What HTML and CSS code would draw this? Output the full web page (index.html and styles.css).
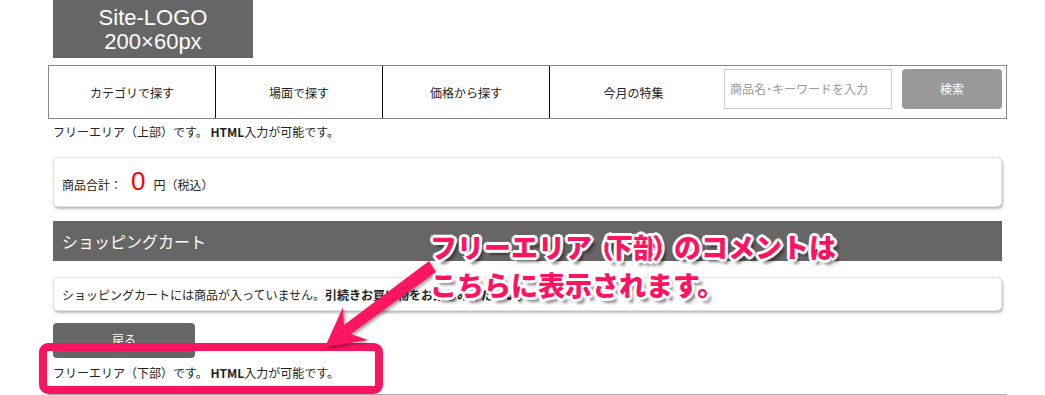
FILE: index.html
```html
<!DOCTYPE html>
<html lang="ja">
<head>
<meta charset="utf-8">
<title>Cart</title>
<link rel="stylesheet" href="styles.css">
</head>
<body>
<div class="page">
  <div class="inner">
    <div class="logo"><span>Site-LOGO</span><span>200×60px</span></div>
  </div>
  <nav class="gnav">
    <a class="gnav-item">カテゴリで探す</a>
    <a class="gnav-item">場面で探す</a>
    <a class="gnav-item">価格から探す</a>
    <a class="gnav-item last">今月の特集</a>
    <div class="search">
      <div class="search-input">商品名･キーワードを入力</div>
      <div class="search-btn">検索</div>
    </div>
  </nav>
  <div class="inner">
    <p class="free top">フリーエリア（上部）です。 <b>HTML</b>入力が可能です。</p>
    <div class="card total">商品合計： <span class="price">0</span> 円（税込）</div>
    <h2 class="cart-head">ショッピングカート</h2>
    <div class="card empty">ショッピングカートには商品が入っていません。<b>引続きお買い物をお楽しみください。</b></div>
    <div class="back">戻る</div>
    <p class="free bottom">フリーエリア（下部）です。 <b>HTML</b>入力が可能です。</p>
  </div>
</div>

<svg class="annot-svg" width="1045" height="395" viewBox="0 0 1045 395">
  <defs>
    <filter id="sh" x="-20%" y="-20%" width="140%" height="140%">
      <feDropShadow dx="2" dy="2" stdDeviation="1.5" flood-color="#000" flood-opacity="0.35"/>
    </filter>
  </defs>
  <rect x="43" y="347" width="336" height="43" rx="5" ry="5" fill="none" stroke="#fc1461" stroke-width="8"/>
  <polygon filter="url(#sh)" fill="#fc1461" points="436,272 351,334 368,340 325,347 343,307 344,325 429,261"/>
</svg>
<div class="annot-text">フリーエリア<span class="pl">（</span>下部<span class="pr">）</span>のコメントは<br>こちらに表示されます。</div>
</body>
</html>
```

FILE: styles.css
```css
html, body {
  margin: 0;
  padding: 0;
  background: #fff;
}
body {
  font-family: "Noto Sans CJK JP", "Liberation Sans", sans-serif;
  font-size: 12px;
  color: #222;
  width: 1045px;
  height: 395px;
  overflow: hidden;
  position: relative;
}
.page {
  width: 959px;
  margin-left: 48px;
  border-bottom: 1px solid #aaa;
}
.inner {
  padding: 0 5px;
}
.logo {
  width: 200px;
  height: 58px;
  background: #666;
  color: #fff;
  font-family: "Liberation Sans", Arial, sans-serif;
  font-size: 22px;
  line-height: 24px;
  display: flex;
  flex-direction: column;
  align-items: center;
  justify-content: center;
  padding-top: 1px;
  box-sizing: border-box;
}
.gnav {
  margin-top: 7px;
  height: 54px;
  box-sizing: border-box;
  border: 1px solid #888;
  display: flex;
}
.gnav-item {
  width: 166px;
  border-right: 1px solid #111;
  display: flex;
  align-items: center;
  justify-content: center;
  color: #222;
  padding-top: 1px;
}
.gnav-item.last {
  border-right: none;
  width: 167px;
}
.search {
  flex: 1;
  display: flex;
  justify-content: flex-end;
  align-items: flex-start;
  gap: 10px;
  padding: 3px 4px 0 0;
}
.search-input {
  width: 168px;
  height: 40px;
  box-sizing: border-box;
  border: 1px solid #ccc;
  color: #999;
  padding-left: 5px;
  line-height: 38px;
}
.search-btn {
  width: 100px;
  height: 40px;
  background: #999;
  border-radius: 4px;
  color: #fff;
  text-align: center;
  line-height: 40px;
}
.free {
  margin: 0;
  line-height: 16px;
  color: #222;
}
.free.top {
  margin-top: 5px;
}
.card {
  background: #fff;
  border: 1px solid #e2e2e2;
  border-radius: 5px;
  box-shadow: 1px 2px 3px rgba(0, 0, 0, 0.28);
  padding: 0 8px;
  box-sizing: border-box;
  display: flex;
  align-items: center;
}
.card.total {
  margin-top: 17px;
  height: 50px;
  padding-top: 4px;
}
.price {
  color: #f00;
  font-family: "Liberation Sans", Arial, sans-serif;
  font-size: 26px;
  margin: 0 8px 0 9px;
  position: relative;
  top: -3px;
}
.cart-head {
  margin: 14px 0 0;
  height: 40px;
  background: #666;
  color: #fff;
  font-size: 16px;
  font-weight: normal;
  line-height: 40px;
  padding-left: 9px;
}
.card.empty {
  margin-top: 16px;
  height: 34px;
}
.card.empty b {
  font-weight: bold;
}
.back {
  margin-top: 12px;
  width: 142px;
  height: 35px;
  background: #666;
  border-radius: 4px;
  color: #fff;
  text-align: center;
  line-height: 34px;
}
.free.bottom {
  margin-top: 7px;
  padding-bottom: 13px;
}
.annot-svg {
  position: absolute;
  left: 0;
  top: 0;
}
.annot-text {
  position: absolute;
  left: 430px;
  top: 228px;
  font-family: "Noto Sans CJK JP", sans-serif;
  font-weight: 900;
  font-size: 27px;
  line-height: 38px;
  color: #fc1461;
  white-space: nowrap;
  text-shadow:
    3px 0 0 #fff, -3px 0 0 #fff, 0 3px 0 #fff, 0 -3px 0 #fff,
    2px 2px 0 #fff, -2px -2px 0 #fff, 2px -2px 0 #fff, -2px 2px 0 #fff,
    4px 5px 3px rgba(0, 0, 0, 0.45);
}
.pl {
  margin-left: -5px;
  margin-right: -8px;
}
.pr {
  margin-left: -8px;
  margin-right: -5px;
}
```
